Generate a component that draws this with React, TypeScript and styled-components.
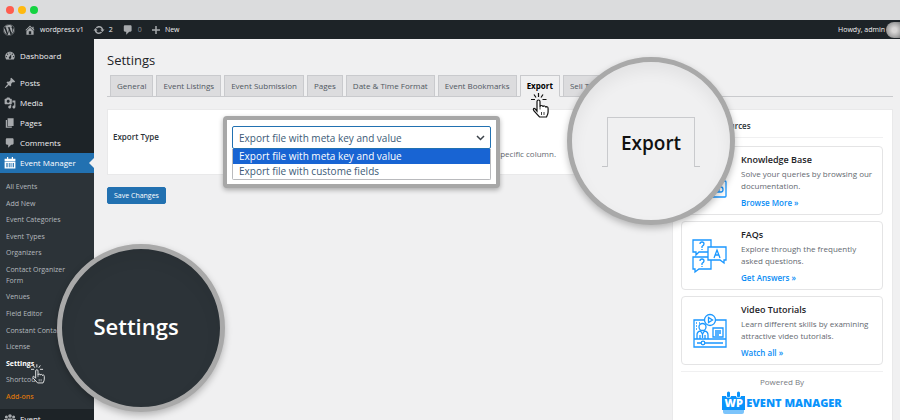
import React from 'react';
import styled, { createGlobalStyle, css } from 'styled-components';
import { FaWordpress } from 'react-icons/fa';

const Global = createGlobalStyle`
  *, *::before, *::after { box-sizing: border-box; }
  body { margin: 0; background: #f0f0f1; font-family: "Open Sans", "Noto Sans", sans-serif; }
  button, select { font-family: inherit; }
  a { text-decoration: none; color: inherit; }
  ul { list-style: none; margin: 0; padding: 0; }
  h1, h2, h3, p { margin: 0; }
`;

const Page = styled.div`
  position: relative;
  display: flex;
  flex-direction: column;
  height: 100vh;
  overflow: hidden;
`;

const WindowBar = styled.div`
  flex: none;
  display: flex;
  align-items: center;
  gap: 4px;
  height: 20px;
  padding: 0 6px;
  background: #dbdcdd;
`;

const Dot = styled.span<{ $color: string }>`
  width: 8px;
  height: 8px;
  border-radius: 50%;
  background: ${(p) => p.$color};
`;

const AdminBar = styled.header`
  flex: none;
  display: flex;
  align-items: center;
  gap: 9px;
  height: 19px;
  padding-left: 3px;
  background: #1d2327;
  color: #f0f0f1;
  font-size: 7px;
  line-height: 10px;
`;

const BarLink = styled.a<{ $dim?: boolean }>`
  display: flex;
  align-items: center;
  gap: 4px;
  svg { color: #a7aaad; }
  ${(p) => p.$dim && css`color: #8c8f94;`}
`;

const Account = styled.a`
  display: flex;
  align-items: center;
  gap: 1px;
  margin-left: auto;
`;

const Avatar = styled.span`
  width: 14px;
  height: 16px;
  border-radius: 8px 0 0 8px;
  background: radial-gradient(circle at 60% 50%, #d8d6d5 20%, #a5a5a5 60%, #666 100%);
`;

const Body = styled.div`
  flex: 1;
  min-height: 0;
  display: flex;
`;

const Sidebar = styled.nav`
  flex: none;
  width: 94px;
  padding-top: 7px;
  background: #1d2327;
  overflow: hidden;
`;

const MenuLink = styled.a<{ $active?: boolean; $spaced?: boolean }>`
  position: relative;
  display: flex;
  align-items: center;
  gap: 4px;
  height: 20px;
  padding-left: 4px;
  margin-bottom: ${(p) => (p.$spaced ? 7 : 0)}px;
  color: #f0f0f1;
  font-size: 8px;
  line-height: 12px;
  svg { color: #a7aaad; }
  ${(p) =>
    p.$active &&
    css`
      background: #2271b1;
      color: #fff;
      svg { color: #fff; }
      &::after {
        content: '';
        position: absolute;
        right: 0;
        top: 5px;
        border: 5px solid transparent;
        border-right-color: #f0f0f1;
        border-left-width: 0;
      }
    `}
`;

const SubMenu = styled.ul`
  display: flex;
  flex-direction: column;
  justify-content: space-between;
  height: 236px;
  padding: 8px 6px 7px;
  background: #2c3338;
`;

const SubLink = styled.a<{ $current?: boolean; $accent?: boolean }>`
  display: block;
  color: ${(p) => (p.$current ? '#fff' : p.$accent ? '#d9730d' : '#b4b9be')};
  font-size: 7px;
  font-weight: ${(p) => (p.$current ? 700 : p.$accent ? 600 : 400)};
  line-height: 11px;
  white-space: pre;
`;

const Main = styled.main`
  flex: 1;
  min-width: 0;
  display: flex;
  flex-direction: column;
  padding: 12px 7px 0 13px;
  background: #f0f0f1;
`;

const Heading = styled.h1`
  color: #1d2327;
  font-size: 13px;
  font-weight: 400;
  line-height: 18px;
`;

const Tabs = styled.nav`
  display: flex;
  gap: 3px;
  height: 28px;
  padding: 6px 0 0 3px;
  border-bottom: 1px solid #c9cacd;
`;

const Tab = styled.a<{ $active?: boolean }>`
  height: 22px;
  padding: 0 6px;
  border: 1px solid #c9cacd;
  border-bottom: ${(p) => (p.$active ? '1px solid #f0f0f1' : '1px solid #c9cacd')};
  background: ${(p) => (p.$active ? '#f0f0f1' : '#dcdcde')};
  color: ${(p) => (p.$active ? '#000' : '#50575e')};
  font-size: 8px;
  font-weight: ${(p) => (p.$active ? 700 : 500)};
  line-height: 20px;
  white-space: nowrap;
`;

const Columns = styled.div`
  flex: 1;
  min-height: 0;
  display: flex;
  align-items: stretch;
  gap: 9px;
  margin-top: 12px;
`;

const FormColumn = styled.form`
  flex: 1;
  min-width: 0;
`;

const Panel = styled.section`
  position: relative;
  display: flex;
  height: 66px;
  padding: 21px 5px 0;
  border: 1px solid #e9e9ea;
  background: #fff;
`;

const FieldLabel = styled.label`
  width: 119px;
  color: #2c3338;
  font-size: 8px;
  font-weight: 600;
  line-height: 12px;
`;

const Hint = styled.p`
  margin-top: 17px;
  width: 324px;
  color: #646970;
  font-size: 8px;
  line-height: 12px;
  text-align: right;
  white-space: nowrap;
`;

const Callout = styled.div`
  position: absolute;
  left: 115px;
  top: 6px;
  width: 277px;
  padding: 6px 5px 4px;
  border: 4px solid #a7a7a7;
  border-radius: 4px;
  background: #fff;
  box-shadow: 0 2px 5px rgba(0, 0, 0, 0.3);
`;

const SelectWrap = styled.div`
  display: grid;
  align-items: center;
  svg, select { grid-area: 1 / 1; }
  svg { justify-self: end; margin-right: 6px; pointer-events: none; }
`;

const Select = styled.select`
  appearance: none;
  width: 100%;
  height: 23px;
  padding: 0 6px;
  border: 1px solid #2271b1;
  border-radius: 2px;
  background: #fff;
  color: #3c5a76;
  font-size: 10px;
`;

const Options = styled.ul`
  border: 1px solid #b9babd;
  border-top: 0;
  border-radius: 0 0 2px 2px;
`;

const Option = styled.li<{ $selected?: boolean }>`
  height: 15px;
  padding-left: 6px;
  background: ${(p) => (p.$selected ? '#1864d3' : '#fff')};
  color: ${(p) => (p.$selected ? '#fff' : '#3c5a76')};
  font-size: 10px;
  line-height: 15px;
`;

const SaveButton = styled.button`
  display: block;
  height: 17px;
  margin-top: 12px;
  padding: 0 6px;
  border: 1px solid #2271b1;
  border-radius: 2px;
  background: #2271b1;
  color: #fff;
  font-size: 7px;
  line-height: 15px;
  font-weight: 500;
`;

const Resources = styled.aside`
  flex: none;
  width: 221px;
  padding: 0 9px 0 8px;
  border: 1px solid #e9e9ea;
  border-bottom: 0;
  background: #fff;
`;

const ResourcesTitle = styled.h2`
  height: 28px;
  margin-bottom: 8px;
  padding-top: 10px;
  border-bottom: 1px solid #f0f0f1;
  color: #2c3338;
  font-size: 8px;
  font-weight: 600;
  line-height: 12px;
`;

const Card = styled.article`
  display: flex;
  align-items: center;
  height: 69px;
  margin-bottom: 6px;
  padding-left: 10px;
  gap: 13px;
  border: 1px solid #e4e4e5;
  border-radius: 4px;
`;

const CardTitle = styled.h3`
  color: #1d2327;
  font-size: 9px;
  font-weight: 600;
  line-height: 13px;
`;

const CardText = styled.p`
  margin: 2px 0 5px;
  color: #646970;
  font-size: 8px;
  line-height: 12px;
  white-space: pre-line;
`;

const CardLink = styled.a`
  display: block;
  color: #0a8df5;
  font-size: 8px;
  font-weight: 600;
  line-height: 12px;
`;

const Powered = styled.footer`
  display: flex;
  flex-direction: column;
  align-items: center;
  gap: 3px;
  padding-top: 4px;
  border-top: 1px solid #f0f0f1;
  color: #787c82;
  font-size: 8px;
  line-height: 12px;
`;

const Brand = styled.div`
  display: flex;
  align-items: center;
  gap: 1px;
  color: #0a93fb;
  font-size: 11px;
  font-weight: 800;
  line-height: 24px;
  white-space: nowrap;
`;

const BrandMark = styled.span`
  display: grid;
  place-items: center;
  svg, span { grid-area: 1 / 1; }
  span {
    color: #fff;
    font-size: 11px;
    line-height: 12px;
  }
`;

const Lens = styled.div<{ $x: number; $y: number; $dark?: boolean }>`
  position: absolute;
  left: ${(p) => p.$x}px;
  top: ${(p) => p.$y}px;
  display: flex;
  align-items: center;
  justify-content: center;
  width: 168px;
  height: 168px;
  padding: ${(p) => (p.$dark ? '0 10px 4px 0' : '2px 0 0')};
  border: 5px solid #a9a9a9;
  border-radius: 50%;
  background: ${(p) => (p.$dark ? '#2c3338' : '#f0f0f1')};
  box-shadow: 0 3px 7px rgba(0, 0, 0, 0.25), inset 0 8px 16px rgba(0, 0, 0, 0.06);
  color: ${(p) => (p.$dark ? '#fff' : '#111')};
  font-size: ${(p) => (p.$dark ? 22 : 19)}px;
  font-weight: 600;
  line-height: 28px;
`;

const BigTab = styled.div`
  display: flex;
  align-items: flex-end;
  &::before, &::after {
    content: '';
    width: 5px;
    border-bottom: 1px solid #c3c4c7;
  }
`;

const BigTabFace = styled.span`
  width: 88px;
  height: 50px;
  border: 1px solid #c9cacd;
  border-bottom: 0;
  line-height: 50px;
  text-align: center;
`;

const Pointer = styled.svg<{ $x: number; $y: number }>`
  position: absolute;
  left: ${(p) => p.$x}px;
  top: ${(p) => p.$y}px;
`;

const DASH = {
  home: 'M16 8.5l1.53 1.53-1.06 1.06L10 4.6l-6.47 6.49-1.06-1.06L10 2.5l4 4v-2h2v4zm-6-2.46l6 5.99V18H4v-5.97zM12 17v-5H8v5h4z',
  update:
    'M10.2 3.28c3.53 0 6.43 2.61 6.92 6h2.08l-3.5 4-3.5-4h2.32c-.45-1.97-2.21-3.45-4.32-3.45-1.45 0-2.73.71-3.54 1.78L4.95 5.66C6.23 4.2 8.11 3.28 10.2 3.28zm-.4 13.44c-3.52 0-6.43-2.61-6.92-6H.8l3.5-4c1.17 1.33 2.33 2.67 3.5 4H5.48c.45 1.97 2.21 3.45 4.32 3.45 1.45 0 2.73-.71 3.54-1.78l1.71 1.95c-1.28 1.46-3.15 2.38-5.25 2.38z',
  comment: 'M5 2h9c1.1 0 2 .9 2 2v7c0 1.1-.9 2-2 2h-2l-5 5v-5H5c-1.1 0-2-.9-2-2V4c0-1.1.9-2 2-2z',
  plus: 'M8.5 2h3v6.500h6.500v3h-6.500V18h-3v-6.500H2v-3h6.500z',
  dashboard:
    'M3.76 16h12.48c1.1-1.37 1.76-3.11 1.76-5 0-4.42-3.58-8-8-8s-8 3.58-8 8c0 1.89.66 3.63 1.76 5zM10 4c.55 0 1 .45 1 1s-.45 1-1 1-1-.45-1-1 .45-1 1-1zM6 6c.55 0 1 .45 1 1s-.45 1-1 1-1-.45-1-1 .45-1 1-1zm8 0c.55 0 1 .45 1 1s-.45 1-1 1-1-.45-1-1 .45-1 1-1zm-5.37 5.55L12 7v6c0 1.1-.9 2-2 2s-2-.9-2-2c0-.57.24-1.08.63-1.45zM4 10c.55 0 1 .45 1 1s-.45 1-1 1-1-.45-1-1 .45-1 1-1zm12 0c.55 0 1 .45 1 1s-.45 1-1 1-1-.45-1-1 .45-1 1-1z',
  post: 'M10.44 3.02l1.82-1.82 6.36 6.35-1.83 1.82c-1.05-.68-2.48-.57-3.41.36l-.75.75c-.92.93-1.04 2.35-.35 3.41l-1.83 1.82-2.41-2.41-2.8 2.79c-.42.42-3.38 2.71-3.8 2.29s1.86-3.39 2.28-3.81l2.79-2.79L4.1 9.36l1.83-1.82c1.05.69 2.48.57 3.4-.36l.75-.75c.93-.92 1.05-2.35.36-3.41z',
  media:
    'M13 11V4c0-.55-.45-1-1-1h-1.67L9 1H5L3.67 3H2c-.55 0-1 .45-1 1v7c0 .55.45 1 1 1h10c.55 0 1-.45 1-1zM7 4.5c1.38 0 2.5 1.12 2.5 2.5S8.38 9.5 7 9.5 4.5 8.38 4.5 7 5.62 4.5 7 4.5zM14 6h5v10.5c0 1.38-1.12 2.5-2.5 2.5S14 17.88 14 16.5s1.12-2.5 2.5-2.5c.17 0 .34.02.5.05V9h-3V6zm-4 8.05V13h2v3.5c0 1.38-1.12 2.5-2.5 2.5S7 17.88 7 16.5 8.12 14 9.5 14c.17 0 .34.02.5.05z',
  page: 'M6 15V2h10v13H6zm-1 1h8v2H3V5h2v11z',
  calendar:
    'M5 0h2v3h6V0h2v3h4v4H1V3h4zM1 8h18v11H1zm3 2v7h2v-7zm4 0v7h1.500v-7zm3 0v7h1.500v-7zm3.500 0v7h2v-7z',
  groups:
    'M10 2a3 3 0 110 6 3 3 0 010-6zM4 4a2.500 2.500 0 110 5 2.500 2.500 0 010-5zm12 0a2.500 2.500 0 110 5 2.500 2.500 0 010-5zM6 9h8v9H6zM0 10h5v7H1zm15 0h5l-1 7h-4z',
};

function Dashicon({ name, size = 12 }: { name: keyof typeof DASH; size?: number }) {
  return (
    <svg width={size} height={size} viewBox="0 0 20 20" fill="currentColor" fillRule="evenodd" aria-hidden="true">
      <path d={DASH[name]} />
    </svg>
  );
}

function ClickHand({ x, y, light }: { x: number; y: number; light?: boolean }) {
  const line = light ? '#e8eaeb' : '#111';
  const fill = light ? '#2c3338' : '#fff';
  return (
    <Pointer $x={x} $y={y} width={light ? 14 : 18} height={light ? 20 : 25} viewBox="0 0 18 25" fill="none" stroke={line} strokeWidth="1.200" aria-hidden="true">
      <path d="M7.500 0v4M3 1.500l2 3M12 1.500l-2 3M0 6.500h4M11.500 6.500h4" />
      <path
        d="M6 18V8.500q0-1.500 1.500-1.500T9 8.500V14q0-1.500 1.500-1.500T12 14q0-1.200 1.400-1T14.800 14.500q.3-1 1.300-.7t1 1.700V19q0 2-1.600 5H8.500L3 18q-1-1.500-.5-2.200t1.800.2z"
        fill={fill}
      />
      <path d="M9 14v2.500M10.500 19v3M13 19v3" strokeWidth="0.800" />
    </Pointer>
  );
}

function DocsIcon() {
  return (
    <svg width="36" height="36" viewBox="0 0 36 36" fill="none" stroke="#1a97ff" strokeWidth="1.300" aria-hidden="true">
      <path d="M3 2h20l7 7v11M3 2v29h17M8 10h14M8 15h14M8 20h10" />
      <rect x="20" y="18" width="14" height="16" rx="1" />
      <path d="M24 24h5q2 0 2 2.500T29 29h-5zM27 26v3" />
    </svg>
  );
}

function FaqIcon() {
  return (
    <svg width="36" height="36" viewBox="0 0 36 36" fill="none" stroke="#1a97ff" strokeWidth="1.300" aria-hidden="true">
      <path d="M16 14H7l-3 3v-3H1V2h18v7M16 9h18v13h-2v3l-4-3H16zM16 19H1v12h2v3l4-3h12v-9" />
      <path d="M8 6q0-2 2-2t2 2q0 1-2 2.500V10M10 11v1M8 23q0-2 2-2t2 2q0 1-2 2.500V27M10 28v1M22 20l3-8 3 8M23 17h4" />
    </svg>
  );
}

function VideoIcon() {
  return (
    <svg width="36" height="36" viewBox="0 0 36 36" fill="none" stroke="#1a97ff" strokeWidth="1.300" aria-hidden="true">
      <path d="M13 7H2v27h32V7H23M2 26h32" />
      <circle cx="18" cy="7" r="5.500" />
      <path d="M16.500 4.500v5l4-2.500z" />
      <circle cx="10.500" cy="14" r="3.500" />
      <path d="M5 26v-4q0-3.500 3.500-4l2 3 2-3q3.500.5 3.500 4v4M8 22v4M13 22v4M10.500 21v4M21 15h10v9H21zM23 18h6M23 20h6M23 22h4" />
      <circle cx="11" cy="30" r="1.800" />
      <path d="M5 30h4M13 30h18M4 10h1M7 10h1M4 13h1M4 16h1" />
    </svg>
  );
}

const SUB_ITEMS = [
  'All Events', 'Add New', 'Event Categories', 'Event Types', 'Organizers', 'Contact Organizer\nForm',
  'Venues', 'Field Editor', 'Constant Contact', 'License', 'Settings', 'Shortcodes', 'Add-ons',
];

const TABS = [
  'General', 'Event Listings', 'Event Submission', 'Pages', 'Date & Time Format', 'Event Bookmarks', 'Export', 'Sell Tickets',
];

const CARDS = [
  { title: 'Knowledge Base', text: 'Solve your queries by browsing our\ndocumentation.', link: 'Browse More »', Icon: DocsIcon },
  { title: 'FAQs', text: 'Explore through the frequently\nasked questions.', link: 'Get Answers »', Icon: FaqIcon },
  { title: 'Video Tutorials', text: 'Learn different skills by examining\nattractive video tutorials.', link: 'Watch all »', Icon: VideoIcon },
];

export default function App() {
  return (
    <Page>
      <Global />
      <WindowBar>
        <Dot $color="#ff5d4f" />
        <Dot $color="#ffb90f" />
        <Dot $color="#14d340" />
      </WindowBar>
      <AdminBar>
        <BarLink href="#wp" aria-label="WordPress"><FaWordpress size={12} /></BarLink>
        <BarLink href="#site"><Dashicon name="home" />wordpress v1</BarLink>
        <BarLink href="#updates"><Dashicon name="update" />2</BarLink>
        <BarLink href="#comments" $dim><Dashicon name="comment" />0</BarLink>
        <BarLink href="#new"><Dashicon name="plus" size={10} />New</BarLink>
        <Account href="#account">Howdy, admin<Avatar /></Account>
      </AdminBar>
      <Body>
        <Sidebar>
          <MenuLink href="#dashboard" $spaced><Dashicon name="dashboard" />Dashboard</MenuLink>
          <MenuLink href="#posts"><Dashicon name="post" />Posts</MenuLink>
          <MenuLink href="#media"><Dashicon name="media" />Media</MenuLink>
          <MenuLink href="#pages"><Dashicon name="page" />Pages</MenuLink>
          <MenuLink href="#comments"><Dashicon name="comment" />Comments</MenuLink>
          <MenuLink href="#events" $active><Dashicon name="calendar" />Event Manager</MenuLink>
          <SubMenu>
            {SUB_ITEMS.map((s) => (
              <li key={s}>
                <SubLink href="#sub" $current={s === 'Settings'} $accent={s === 'Add-ons'}>{s}</SubLink>
              </li>
            ))}
          </SubMenu>
          <MenuLink href="#event"><Dashicon name="groups" />Event</MenuLink>
        </Sidebar>
        <Main>
          <Heading>Settings</Heading>
          <Tabs>
            {TABS.map((t) => (
              <Tab key={t} href="#tab" $active={t === 'Export'}>{t}</Tab>
            ))}
          </Tabs>
          <Columns>
            <FormColumn>
              <Panel>
                <FieldLabel htmlFor="export-type">Export Type</FieldLabel>
                <Hint>specific column.</Hint>
                <Callout>
                  <SelectWrap>
                    <Select id="export-type" defaultValue="meta">
                      <option value="meta">Export file with meta key and value</option>
                      <option value="custom">Export file with custome fields</option>
                    </Select>
                    <svg width="9" height="6" viewBox="0 0 9 6" fill="none" stroke="#3c434a" strokeWidth="1.500" aria-hidden="true">
                      <path d="M1 1l3.500 3.500L8 1" />
                    </svg>
                  </SelectWrap>
                  <Options>
                    <Option $selected>Export file with meta key and value</Option>
                    <Option>Export file with custome fields</Option>
                  </Options>
                </Callout>
              </Panel>
              <SaveButton type="button">Save Changes</SaveButton>
            </FormColumn>
            <Resources>
              <ResourcesTitle>Helpful Resources</ResourcesTitle>
              {CARDS.map(({ title, text, link, Icon }) => (
                <Card key={title}>
                  <Icon />
                  <div>
                    <CardTitle>{title}</CardTitle>
                    <CardText>{text}</CardText>
                    <CardLink href="#more">{link}</CardLink>
                  </div>
                </Card>
              ))}
              <Powered>
                Powered By
                <Brand>
                  <BrandMark>
                    <svg width="23" height="24" viewBox="0 0 23 24" aria-hidden="true">
                      <path d="M0 5h23v14H0z" fill="#0a93fb" />
                      <path d="M1 19h21v2q0 2-2 2H3q-2 0-2-2z" fill="#7cc4fb" />
                      <path d="M6.500 1.500v3M16.500 1.500v3" stroke="#fff" strokeWidth="5" strokeLinecap="round" />
                      <path d="M6.500 2v3M16.500 2v3" stroke="#0a93fb" strokeWidth="3" strokeLinecap="round" />
                    </svg>
                    <span>WP</span>
                  </BrandMark>
                  EVENT MANAGER
                </Brand>
              </Powered>
            </Resources>
          </Columns>
        </Main>
      </Body>
      <ClickHand x={531} y={93} />
      <ClickHand x={31} y={364} light />
      <Lens $x={57} $y={244} $dark>Settings</Lens>
      <Lens $x={567} $y={57}>
        <BigTab><BigTabFace>Export</BigTabFace></BigTab>
      </Lens>
    </Page>
  );
}
